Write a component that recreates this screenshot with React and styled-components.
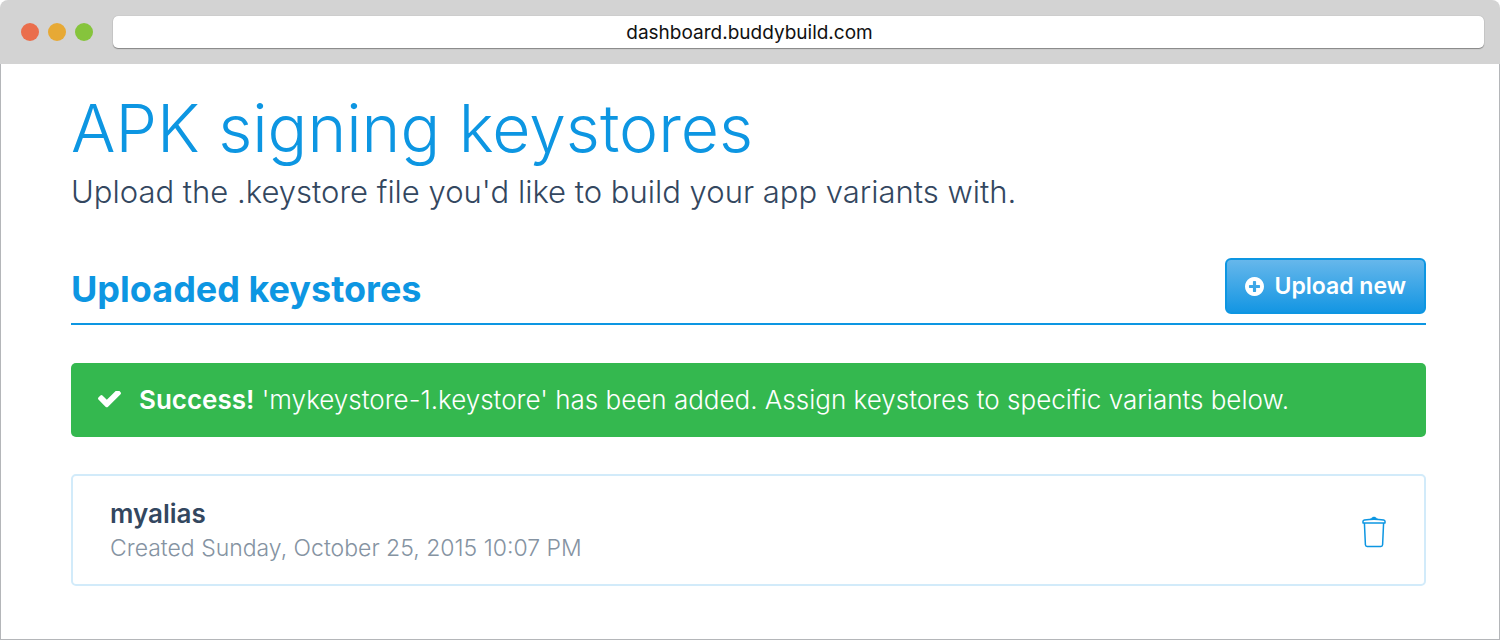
import React from "react";
import styled, { createGlobalStyle } from "styled-components";

const blue = "#0d96e2";
const ink = "#33475f";

const GlobalStyle = createGlobalStyle`
  *, *::before, *::after { box-sizing: border-box; }
  body { margin: 0; background: #fff; font-family: Inter, Lato, sans-serif; color: ${ink}; }
  h1, h2, h3, p, ul { margin: 0; padding: 0; }
`;

const Browser = styled.div`
  display: flex;
  flex-direction: column;
  min-height: 100vh;
`;

const TitleBar = styled.header`
  display: flex;
  align-items: center;
  gap: 20px;
  height: 64px;
  padding: 0 16px 0 21px;
  background: #d3d3d3;
  border-radius: 8px 8px 0 0;
`;

const Lights = styled.div`
  display: flex;
  gap: 9px;
`;

const Light = styled.span`
  width: 18px;
  height: 18px;
  border-radius: 50%;
  background: ${(p) => p.$color};
`;

const Address = styled.input`
  flex: 1;
  min-width: 0;
  height: 32px;
  padding: 0 110px 0 12px;
  border: 0;
  border-radius: 5px;
  background: #fff;
  box-shadow: 0 1px 1px 0 #858585, 0 0 1px 0 #999;
  color: #111;
  font-family: Inter, Roboto, sans-serif;
  font-size: 19px;
  text-align: center;
  outline: none;
`;

const Page = styled.main`
  flex: 1;
  padding: 24px 73px 50px 70px;
  border: 1px solid #b4b6b9;
  border-top: 0;
`;

const Title = styled.h1`
  color: ${blue};
  font-size: 66px;
  font-weight: 300;
  line-height: 80px;
`;

const Lead = styled.p`
  font-size: 31px;
  font-weight: 300;
  line-height: 48px;
`;

const SectionHead = styled.div`
  display: flex;
  align-items: flex-end;
  justify-content: space-between;
  margin-top: 42px;
  padding-bottom: 9px;
  border-bottom: 2px solid ${blue};
`;

const SectionTitle = styled.h2`
  color: ${blue};
  font-size: 36px;
  font-weight: 700;
  line-height: 50px;
`;

const UploadButton = styled.button`
  display: flex;
  align-items: center;
  gap: 10px;
  height: 56px;
  padding: 0 18px;
  border: 2px solid ${blue};
  border-radius: 6px;
  background: linear-gradient(#66b7eb, #1496e3);
  color: #fff;
  font-family: inherit;
  font-size: 23px;
  font-weight: 600;
  cursor: pointer;
`;

const Alert = styled.div`
  display: flex;
  align-items: center;
  gap: 18px;
  min-height: 74px;
  margin-top: 38px;
  padding: 0 27px;
  border-radius: 5px;
  background: #34b84f;
  color: #fff;
  font-size: 26px;
  font-weight: 300;
  line-height: 36px;

  strong { font-weight: 600; }
`;

const Keystores = styled.ul`
  margin-top: 37px;
  list-style: none;
`;

const Keystore = styled.li`
  display: flex;
  align-items: center;
  justify-content: space-between;
  min-height: 112px;
  padding: 0 38px 0 37px;
  border: 2px solid #d2ebfa;
  border-radius: 5px;
`;

const Alias = styled.h3`
  font-size: 26px;
  font-weight: 600;
  line-height: 36px;
`;

const Created = styled.p`
  color: #8593a2;
  font-size: 23px;
  font-weight: 300;
  line-height: 32px;
`;

const IconButton = styled.button`
  display: flex;
  padding: 4px 0 0;
  border: 0;
  background: none;
  color: ${blue};
  cursor: pointer;
`;

const PlusIcon = () => (
  <svg width="19" height="19" viewBox="128 128 1536 1536" fill="currentColor" aria-hidden="true">
    <path d="M1344 960v-128q0-26-19-45t-45-19h-256v-256q0-26-19-45t-45-19h-128q-26 0-45 19t-19 45v256h-256q-26 0-45 19t-19 45v128q0 26 19 45t45 19h256v256q0 26 19 45t45 19h128q26 0 45-19t19-45v-256h256q26 0 45-19t19-45zm320-64q0 209-103 385.5t-279.5 279.5-385.5 103-385.5-103-279.5-279.5-103-385.5 103-385.5 279.5-279.5 385.5-103 385.5 103 279.5 279.5 103 385.5z" />
  </svg>
);

const CheckIcon = () => (
  <svg width="23" height="18" viewBox="121 434 1550 1188" fill="currentColor" aria-hidden="true">
    <path d="M1671 566q0 40-28 68l-724 724-136 136q-28 28-68 28t-68-28l-136-136-362-362q-28-28-28-68t28-68l136-136q28-28 68-28t68 28l294 295 656-657q28-28 68-28t68 28l136 136q28 28 28 68z" />
  </svg>
);

const TrashIcon = () => (
  <svg width="24" height="32" viewBox="0 0 24 32" fill="none" stroke="currentColor" strokeWidth="1.5" strokeLinejoin="round" aria-hidden="true">
    <path d="M1 6.9V5.2C1 4.4 1.6 4 2.4 3.9C8.4 3.1 15.6 3.1 21.6 3.9C22.4 4 23 4.4 23 5.2V6.9Z" />
    <path d="M8 3.5C8.3 2.6 9 2.5 9.7 2.2C10.2 .6 13.8 .6 14.3 2.2C15 2.5 15.7 2.6 16 3.5Z" fill="currentColor" strokeWidth="0.5" />
    <path d="M2.4 7L3.4 28.8C3.5 29.9 4.1 30.4 5.1 30.4H18.9C19.9 30.4 20.5 29.9 20.6 28.8L21.6 7" />
  </svg>
);

const keystores = [{ alias: "myalias", created: "Created Sunday, October 25, 2015 10:07 PM" }];

export default function App() {
  return (
    <Browser>
      <GlobalStyle />
      <TitleBar>
        <Lights>
          <Light $color="#ea6e4c" />
          <Light $color="#e7a935" />
          <Light $color="#86c43c" />
        </Lights>
        <Address type="text" aria-label="Address" defaultValue="dashboard.buddybuild.com" />
      </TitleBar>
      <Page>
        <Title>APK signing keystores</Title>
        <Lead>Upload the .keystore file you'd like to build your app variants with.</Lead>
        <SectionHead>
          <SectionTitle>Uploaded keystores</SectionTitle>
          <UploadButton type="button">
            <PlusIcon />
            Upload new
          </UploadButton>
        </SectionHead>
        <Alert role="status">
          <CheckIcon />
          <p>
            <strong>Success!</strong> 'mykeystore-1.keystore' has been added. Assign keystores to specific variants below.
          </p>
        </Alert>
        <Keystores>
          {keystores.map((k) => (
            <Keystore key={k.alias}>
              <div>
                <Alias>{k.alias}</Alias>
                <Created>{k.created}</Created>
              </div>
              <IconButton type="button" aria-label={`Delete ${k.alias}`}>
                <TrashIcon />
              </IconButton>
            </Keystore>
          ))}
        </Keystores>
      </Page>
    </Browser>
  );
}
